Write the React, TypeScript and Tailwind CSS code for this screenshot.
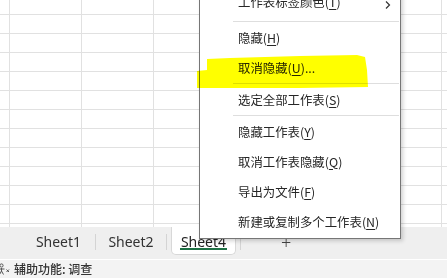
import React from "react";

const cjk = { fontFamily: '"Noto Sans CJK SC", "Noto Sans", sans-serif' };

type Item = { label: string; key: string; tail?: string; arrow?: boolean; sepAfter?: boolean };

const items: Item[] = [
  { label: "工作表标签颜色", key: "T", arrow: true, sepAfter: true },
  { label: "隐藏", key: "H" },
  { label: "取消隐藏", key: "U", tail: "...", sepAfter: true },
  { label: "选定全部工作表", key: "S", sepAfter: true },
  { label: "隐藏工作表", key: "Y" },
  { label: "取消工作表隐藏", key: "Q" },
  { label: "导出为文件", key: "F" },
  { label: "新建或复制多个工作表", key: "N" },
];

const Grid: React.FC = () => {
  const rows = 13;
  const cols = 7;
  return (
    <div className="h-[227px] overflow-hidden bg-white">
      {[...Array(rows)].map((_, r) => (
        <div
          key={r}
          className={`flex border-b border-[#e1e1e1] ${r === 0 ? "h-[15px]" : "h-[19px]"}`}
        >
          <div className="w-[10px] shrink-0 border-r border-[#e1e1e1]" />
          {[...Array(cols)].map((_, c) => (
            <div key={c} className="w-[72px] shrink-0 border-r border-[#e1e1e1]" />
          ))}
        </div>
      ))}
    </div>
  );
};

const ContextMenu: React.FC = () => (
  <div
    className="absolute left-[199px] top-[-10px] w-[202px] bg-white border border-[#767676] shadow-[2px_2px_4px_rgba(0,0,0,0.18)] pb-[1px] text-[12.4px] text-[#262626]"
    style={cjk}
  >
    {items.map((it, i) => (
      <React.Fragment key={it.key}>
        <div className={`relative h-[30px] flex items-center pl-[38px] ${i === 0 ? "pb-[7px]" : ""}`}>
          <span>
            {it.label}(<span className="underline underline-offset-2">{it.key}</span>){it.tail}
          </span>
          {it.arrow && (
            <svg
              className="absolute right-[9px] top-[10px]"
              width="6"
              height="8"
              viewBox="0 0 6 8"
              fill="none"
            >
              <path d="M1 0.5l3.5 3.5L1 7.5" stroke="#333" strokeWidth="1.2" />
            </svg>
          )}
        </div>
        {it.sepAfter && <div className="ml-[33px] mr-[1px] h-[2px] border-t border-[#dedede]" />}
      </React.Fragment>
    ))}
  </div>
);

const TabBar: React.FC = () => (
  <div className="h-[32px] bg-[#efefef] flex items-start text-[14px] text-[#333]" style={{ fontFamily: '"Noto Sans", sans-serif' }}>
    <div className="w-[22px]" />
    <div className="w-[73px] h-[29px] flex items-center justify-center">Sheet1</div>
    <div className="w-px h-[16px] mt-[7px] bg-[#d4d4d4]" />
    <div className="w-[70px] h-[29px] flex items-center justify-center">Sheet2</div>
    <div className="w-px h-[16px] mt-[7px] bg-[#d4d4d4]" />
    <div className="w-[4px]" />
    <div className="relative w-[65px] h-[28px] bg-white border border-t-0 border-[#d8d8d8] rounded-b-[5px] flex items-center justify-center">
      <span className="text-[#222] mt-[1px]">Sheet4</span>
      <div className="absolute left-[8px] right-[8px] bottom-[4px] h-[2px] bg-[#1e7145]" />
    </div>
    <div className="w-[4px]" />
    <div className="w-px h-[16px] mt-[7px] bg-[#d4d4d4]" />
    <div className="w-[40px]" />
    <div className="h-[30px] flex items-center text-[18px] text-[#444] font-light">+</div>
  </div>
);

const StatusBar: React.FC = () => (
  <div className="h-[19px] bg-[#f3f3f3] border-t border-white flex items-center gap-[4px] text-[12px] text-[#333] font-medium" style={cjk}>
    <svg width="12" height="12" viewBox="0 0 12 12" className="ml-[-2px]" fill="none" stroke="#555" strokeWidth="1">
      <circle cx="3.5" cy="2.5" r="1.6" />
      <path d="M0.5 6h6M3.5 5v3l-2 3.5M3.5 8l2 3.5" />
      <path d="M8.5 6.5l2.5 2.5M11 6.5l-2.5 2.5" />
    </svg>
    <span>辅助功能: 调查</span>
  </div>
);

export default function App() {
  return (
    <div className="relative w-[447px] h-[279px] overflow-hidden bg-white">
      <Grid />
      <TabBar />
      <StatusBar />
      <ContextMenu />
      <svg
        className="absolute left-0 top-0 pointer-events-none mix-blend-multiply"
        width="447"
        height="279"
      >
        <polygon
          points="197,71 207,70 207,59 230,58 300,56 357,55 365,57 367,70 368,87 300,88 197,88"
          fill="#ffff00"
        />
      </svg>
    </div>
  );
}
